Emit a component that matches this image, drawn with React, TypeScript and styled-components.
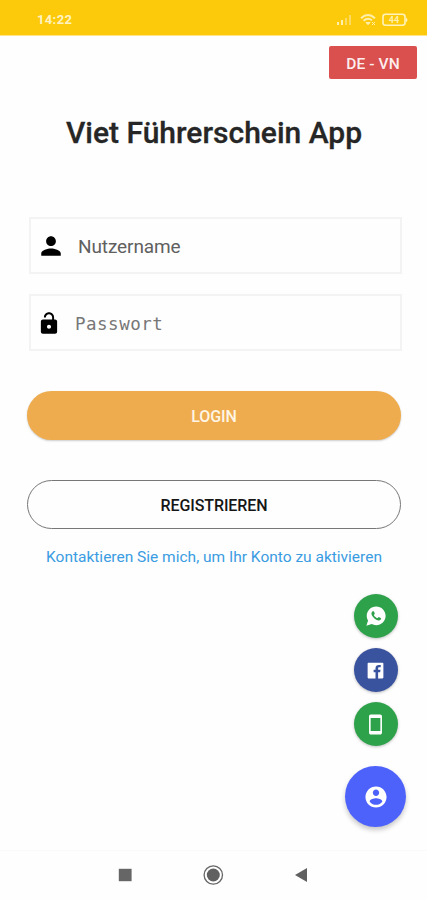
import React from "react";
import styled, { createGlobalStyle } from "styled-components";
import {
  IoMdPerson,
  IoMdUnlock,
  IoMdContact,
  IoMdPhonePortrait,
  IoLogoWhatsapp,
  IoLogoFacebook,
} from "react-icons/io";

const GlobalStyle = createGlobalStyle`
  * { box-sizing: border-box; }
  body { margin: 0; background: #fefefe; font-family: Roboto, "Noto Sans", sans-serif; }
  button, input { font-family: inherit; }
`;

const Screen = styled.div`
  width: 427px;
  height: 900px;
  display: flex;
  flex-direction: column;
  overflow: hidden;
  background: #fefefe;
`;

const StatusBar = styled.header`
  height: 35px;
  flex: none;
  display: flex;
  align-items: center;
  justify-content: space-between;
  padding: 4px 18px 0 37px;
  background: #fdc90b;
  box-shadow: 0 1px 0 #fee48a;
  color: #fff3c4;
`;

const Clock = styled.span`
  font-size: 13px;
  line-height: 15px;
  font-weight: 700;
  letter-spacing: 0.35px;
`;

const Main = styled.main`
  flex: 1;
  display: flex;
  flex-direction: column;
  padding: 11px 26px 0 27px;
`;

const LanguageButton = styled.button`
  align-self: flex-end;
  width: 88px;
  height: 33px;
  margin-right: -16px;
  padding: 2px 0 0;
  border: 0;
  border-radius: 2px;
  background: #d9504e;
  color: #fdeeee;
  font-size: 15.5px;
  font-weight: 500;
  letter-spacing: 0.1px;
`;

const Title = styled.h1`
  margin: 36px 0 0;
  height: 36px;
  line-height: 36px;
  text-align: center;
  white-space: nowrap;
  font-size: 30px;
  font-weight: 500;
  color: #262626;
  -webkit-text-stroke: 0.3px #262626;
`;

const Fields = styled.div`
  display: flex;
  flex-direction: column;
  gap: 20px;
  margin: 66px -1px 0 2px;
`;

const Field = styled.label`
  height: 57px;
  display: flex;
  align-items: center;
  border: 2px solid #f3f3f3;
  color: #000;
`;

const FieldIcon = styled.span<{ $width: number; $inset: number }>`
  flex: none;
  width: ${(p) => p.$width}px;
  display: flex;
  padding-left: ${(p) => p.$inset}px;
`;

const Input = styled.input<{ $mono?: boolean }>`
  flex: 1;
  min-width: 0;
  padding: 2px 0 0;
  border: 0;
  outline: 0;
  background: transparent;
  font-family: ${(p) => (p.$mono ? '"DejaVu Sans Mono", monospace' : "inherit")};
  font-size: ${(p) => (p.$mono ? 17.5 : 19)}px;
  letter-spacing: ${(p) => (p.$mono ? 0.5 : -0.1)}px;
  &::placeholder {
    color: ${(p) => (p.$mono ? "#777" : "#606060")};
    opacity: 1;
  }
`;

const Button = styled.button<{ $outlined?: boolean }>`
  height: 49px;
  margin-top: 40px;
  padding: 2px 0 0;
  border: ${(p) => (p.$outlined ? "1px solid #777" : "0")};
  border-radius: 25px;
  background: ${(p) => (p.$outlined ? "#fefefe" : "#eeac4e")};
  color: ${(p) => (p.$outlined ? "#161616" : "#fff5e5")};
  box-shadow: ${(p) => (p.$outlined ? "none" : "0 1px 2px rgba(0, 0, 0, 0.2)")};
  font-size: 16px;
  font-weight: 500;
  letter-spacing: -0.1px;
`;

const ContactLink = styled.a`
  margin-top: 18px;
  line-height: 20px;
  text-align: center;
  white-space: nowrap;
  font-size: 15.5px;
  color: #3a9ce2;
`;

const Actions = styled.div`
  align-self: flex-end;
  width: 61px;
  margin: 27px -5px 0 0;
  display: flex;
  flex-direction: column;
  align-items: center;
  gap: 10px;
`;

const ActionButton = styled.button<{ $color: string; $large?: boolean }>`
  width: ${(p) => (p.$large ? 61 : 44)}px;
  height: ${(p) => (p.$large ? 61 : 44)}px;
  margin-top: ${(p) => (p.$large ? 10 : 0)}px;
  display: flex;
  align-items: center;
  justify-content: center;
  padding: 0;
  border: 0;
  border-radius: 50%;
  color: #fff;
  background: ${(p) => p.$color};
  box-shadow: ${(p) =>
    p.$large ? "0 3px 5px rgba(0, 0, 0, 0.22)" : "0 1px 3px rgba(0, 0, 0, 0.25)"};
`;

const NavBar = styled.nav`
  height: 50px;
  flex: none;
  display: flex;
  align-items: center;
  justify-content: space-between;
  padding: 0 119px 2px 118px;
  border-top: 1px solid #fafafa;
`;

function StatusIcons() {
  return (
    <svg width="74" height="16" viewBox="0 0 74 16" fill="none">
      <g fill="#fff0b0">
        <rect x="2" y="10" width="2" height="3" />
        <rect x="6" y="8" width="2" height="5" />
      </g>
      <g fill="#fddb63">
        <rect x="10" y="6" width="2" height="7" />
        <rect x="14" y="3" width="2" height="10" />
      </g>
      <g stroke="#fff0b0" strokeWidth="1.9">
        <path d="M26 6.2Q33 0 40 6.2M28.5 8.8Q33 5 37 8.4" />
        <path d="M31 10.5L33 12.7L35 10.5Z" fill="#fff0b0" strokeWidth="1" />
        <path d="M37 10L40 13M40 10L37 13" strokeWidth="1" />
      </g>
      <rect x="48" y="2.3" width="22" height="11" rx="2.5" stroke="#fff3bd" strokeWidth="1.6" />
      <path d="M71 5.5Q74 8 71 10.3Z" fill="#fff3bd" />
      <text x="59" y="11.2" textAnchor="middle" fontFamily="Roboto, sans-serif" fontSize="9" fontWeight="700" fill="#fff0b0">
        44
      </text>
    </svg>
  );
}

export default function App() {
  return (
    <>
      <GlobalStyle />
      <Screen>
        <StatusBar>
          <Clock>14:22</Clock>
          <StatusIcons />
        </StatusBar>
        <Main>
          <LanguageButton>DE - VN</LanguageButton>
          <Title>Viet Führerschein App</Title>
          <Fields>
            <Field>
              <FieldIcon $width={47} $inset={7}>
                <IoMdPerson size={26} />
              </FieldIcon>
              <Input placeholder="Nutzername" />
            </Field>
            <Field>
              <FieldIcon $width={44} $inset={5}>
                <IoMdUnlock size={26} />
              </FieldIcon>
              <Input $mono type="password" placeholder="Passwort" />
            </Field>
          </Fields>
          <Button>LOGIN</Button>
          <Button $outlined>REGISTRIEREN</Button>
          <ContactLink>Kontaktieren Sie mich, um Ihr Konto zu aktivieren</ContactLink>
          <Actions>
            <ActionButton $color="#2ea24b" aria-label="WhatsApp">
              <IoLogoWhatsapp size={22} />
            </ActionButton>
            <ActionButton $color="#3a539f" aria-label="Facebook">
              <IoLogoFacebook size={21} />
            </ActionButton>
            <ActionButton $color="#2ea24b" aria-label="Telefon">
              <IoMdPhonePortrait size={23} />
            </ActionButton>
            <ActionButton $color="#4d62fb" $large aria-label="Kontakt">
              <IoMdContact size={26} />
            </ActionButton>
          </Actions>
        </Main>
        <NavBar>
          <svg width="14" height="14" viewBox="0 0 14 14">
            <rect x="0.8" y="0.8" width="12.8" height="12.4" fill="#666" />
          </svg>
          <svg width="22" height="22" viewBox="0 0 22 22">
            <circle cx="11.3" cy="11" r="9.2" fill="none" stroke="#666" strokeWidth="1.3" />
            <circle cx="11.3" cy="11" r="6.5" fill="#606060" />
          </svg>
          <svg width="14" height="16" viewBox="0 0 14 16">
            <path d="M1 8L13 1V15Z" fill="#606060" />
          </svg>
        </NavBar>
      </Screen>
    </>
  );
}
